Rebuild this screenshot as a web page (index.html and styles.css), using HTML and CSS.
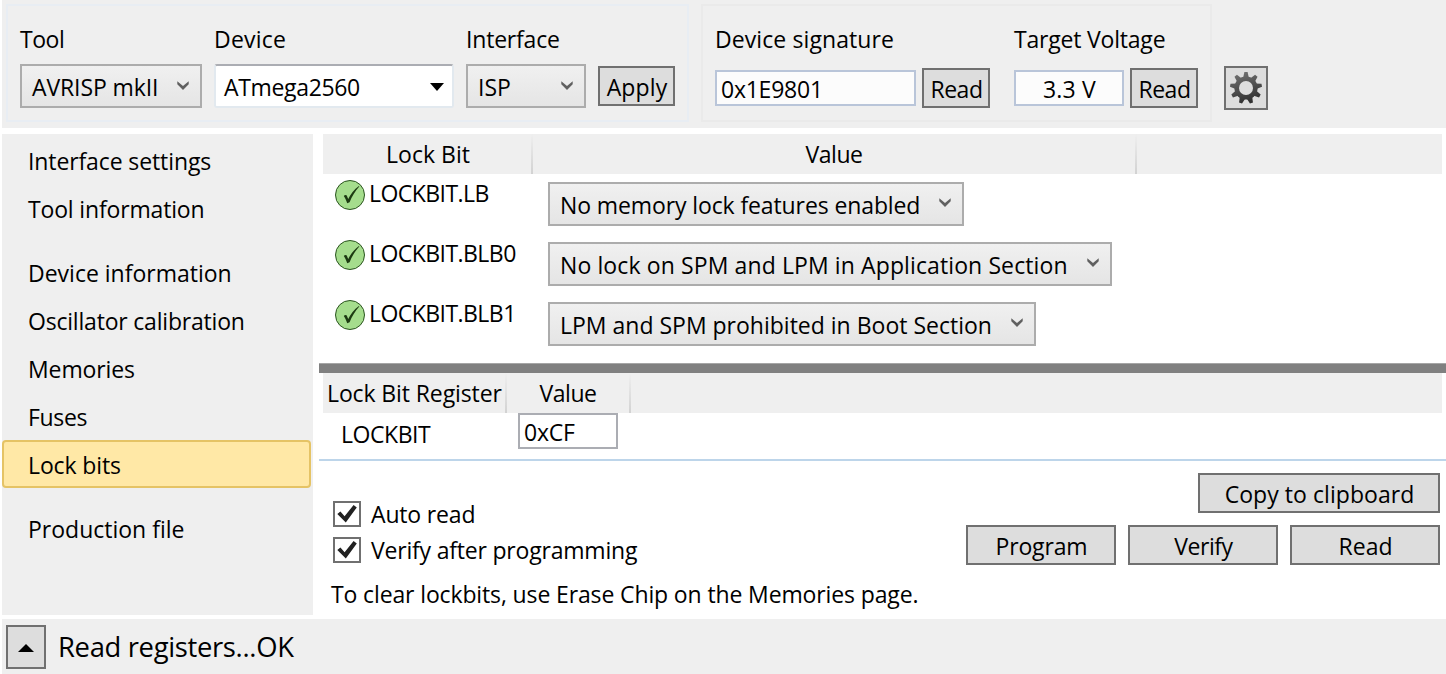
FILE: index.html
```
<!DOCTYPE html>
<html lang="en">
<head>
<meta charset="utf-8">
<title>Device Programming</title>
<link rel="stylesheet" href="styles.css">
</head>
<body>
<svg class="defs" width="0" height="0" aria-hidden="true">
  <defs>
    <symbol id="chevron" viewBox="0 0 12 9"><path d="M0.3 0.2 L6 5 L11.7 0.2 V3.2 L6 9 L0.3 3.2Z" fill="#606060"/></symbol>
    <symbol id="ok" viewBox="0 0 30 30">
      <circle cx="15" cy="15" r="14.5" fill="#a5dd8d" stroke="#2b5420" stroke-width="1"/>
      <path d="M8.8 15.9 C9.6 14.8 11.2 14.6 11.8 15.6 C12.4 16.7 12.6 18 13.2 19.1 C15.6 14.2 19 9.4 24 5.9 L24.3 6.5 C20.2 11 16.8 16.5 14.6 22.2 L12.2 23.2 C11.2 20.5 10.4 18 8.8 15.9Z" fill="#1d3b12"/>
    </symbol>
    <symbol id="tick" viewBox="0 0 28 26"><path d="M4.3 13 L7.4 10.6 L11.6 15.2 L20.6 4 L23.8 6.4 L12.8 21.6 Z" fill="#212121"/></symbol>
  </defs>
</svg>
<div class="window">
  <header class="toolbar">
    <div class="group group-tool">
      <div class="field w-tool">
        <span class="label ls-n45">Tool</span>
        <div class="combo"><span class="combo-text ls-n11">AVRISP mkII</span><svg class="chevron"><use href="#chevron"/></svg></div>
      </div>
      <div class="field w-device">
        <span class="label ls-p20">Device</span>
        <div class="combo editable"><span class="combo-text ls-n34">ATmega2560</span><svg class="arrow" viewBox="0 0 14 8"><path d="M0 0H14L7 8Z"/></svg></div>
      </div>
      <div class="field w-iface">
        <span class="label ls-n20">Interface</span>
        <div class="combo"><span class="combo-text">ISP</span><svg class="chevron"><use href="#chevron"/></svg></div>
      </div>
      <button class="btn btn-apply ls-p13">Apply</button>
    </div>
    <div class="group group-sig">
      <div class="field w-sig">
        <span class="label ls-p09">Device signature</span>
        <div class="readout ls-n24">0x1E9801</div>
      </div>
      <button class="btn btn-read ls-n45">Read</button>
      <div class="field w-volt">
        <span class="label ls-n20">Target Voltage</span>
        <div class="readout centered ls-p20">3.3 V</div>
      </div>
      <button class="btn btn-read ls-n45">Read</button>
    </div>
    <button class="btn btn-gear" aria-label="Settings">
      <svg width="32" height="34" viewBox="-16 -17 32 34">
        <defs>
          <linearGradient id="steel" x1="0.3" y1="0" x2="0.6" y2="1"><stop offset="0" stop-color="#707070"/><stop offset="1" stop-color="#2c2c2c"/></linearGradient>
          <g id="tooth"><path d="M-2.9 -10 L-1.6 -16 H1.6 L2.9 -10Z"/></g>
          <mask id="teeth" maskUnits="userSpaceOnUse" x="-17" y="-17" width="34" height="34">
            <g fill="#fff">
              <circle r="11.6"/>
              <use href="#tooth"/><use href="#tooth" transform="rotate(40)"/><use href="#tooth" transform="rotate(80)"/>
              <use href="#tooth" transform="rotate(120)"/><use href="#tooth" transform="rotate(160)"/><use href="#tooth" transform="rotate(200)"/>
              <use href="#tooth" transform="rotate(240)"/><use href="#tooth" transform="rotate(280)"/><use href="#tooth" transform="rotate(320)"/>
            </g>
            <circle r="7" fill="#000"/>
          </mask>
        </defs>
        <rect x="-16" y="-16" width="32" height="32" fill="url(#steel)" mask="url(#teeth)"/>
      </svg>
    </button>
  </header>

  <div class="body">
    <nav class="sidebar">
      <a class="item ls-n11">Interface settings</a>
      <a class="item ls-n16">Tool information</a>
      <a class="item spaced">Device information</a>
      <a class="item ls-n20">Oscillator calibration</a>
      <a class="item ls-n11">Memories</a>
      <a class="item ls-n34">Fuses</a>
      <a class="item selected ls-n11">Lock bits</a>
      <a class="item spaced">Production file</a>
    </nav>

    <main class="content">
      <div class="head head-bits"><div class="th">Lock Bit</div><div class="th value ls-n45">Value</div></div>
      <div class="bits">
        <div class="bit-row"><svg class="ok"><use href="#ok"/></svg><span class="bit-name">LOCKBIT.LB</span>
          <div class="combo w-lb"><span class="combo-text ls-n11">No memory lock features enabled</span><svg class="chevron up"><use href="#chevron"/></svg></div></div>
        <div class="bit-row"><svg class="ok"><use href="#ok"/></svg><span class="bit-name">LOCKBIT.BLB0</span>
          <div class="combo w-blb0"><span class="combo-text ls-p11">No lock on SPM and LPM in Application Section</span><svg class="chevron up"><use href="#chevron"/></svg></div></div>
        <div class="bit-row"><svg class="ok"><use href="#ok"/></svg><span class="bit-name">LOCKBIT.BLB1</span>
          <div class="combo w-blb1"><span class="combo-text">LPM and SPM prohibited in Boot Section</span><svg class="chevron up"><use href="#chevron"/></svg></div></div>
      </div>
      <div class="splitter"></div>
      <div class="head head-regs"><div class="th first ls-n11">Lock Bit Register</div><div class="th value ls-n45">Value</div></div>
      <div class="reg-row"><span class="reg-name">LOCKBIT</span><div class="reg-value ls-n24">0xCF</div></div>
      <div class="footer">
        <div class="options">
          <label class="check"><svg class="box"><use href="#tick"/></svg><span class="ls-n16">Auto read</span></label>
          <label class="check"><svg class="box"><use href="#tick"/></svg><span class="ls-n20">Verify after programming</span></label>
          <p class="hint">To clear lockbits, use Erase Chip on the Memories page.</p>
        </div>
        <div class="actions">
          <button class="btn btn-copy ls-p05">Copy to clipboard</button>
          <button class="btn ls-n16">Program</button>
          <button class="btn ls-n45">Verify</button>
          <button class="btn">Read</button>
        </div>
      </div>
    </main>
  </div>

  <footer class="status">
    <button class="btn btn-expand" aria-label="Expand"><svg width="16" height="8" viewBox="0 0 16 8"><path d="M0 8 L8 0 L16 8Z"/></svg></button>
    <span class="status-text">Read registers...OK</span>
  </footer>
</div>
</body>
</html>
```
FILE: styles.css
```
* { box-sizing: border-box; }
body {
  margin: 0;
  background: #fff;
  color: #000;
  font: 23px/32px "Open Sans", "Noto Sans", sans-serif;
  white-space: nowrap;
  overflow: hidden;
}
.defs { position: absolute; }
svg { display: block; flex: none; }
.window {
  width: 1446px;
  height: 674px;
  padding-left: 2px;
  display: flex;
  flex-direction: column;
}

/* letter-spacing steps */
.ls-n45 { letter-spacing: -0.45px; }
.ls-n34 { letter-spacing: -0.34px; }
.ls-n24 { letter-spacing: -0.24px; }
.ls-n20 { letter-spacing: -0.2px; }
.ls-n16 { letter-spacing: -0.16px; }
.ls-n11 { letter-spacing: -0.11px; }
.ls-p05 { letter-spacing: 0.05px; }
.ls-p09 { letter-spacing: 0.09px; }
.ls-p11 { letter-spacing: 0.11px; }
.ls-p13 { letter-spacing: 0.13px; }
.ls-p20 { letter-spacing: 0.2px; }

/* shared controls */
.btn {
  height: 40px;
  padding: 2px 0 0 1px;
  border: 2px solid #707070;
  background: #ddd;
  color: #000;
  font-family: inherit;
  font-size: 23px;
  line-height: 34px;
  text-align: center;
}
.combo {
  height: 44px;
  padding: 0 11px 0 10px;
  border: 2px solid #acacac;
  background: linear-gradient(#f0f0f0, #e5e5e5);
  display: flex;
  justify-content: space-between;
}
.combo-text { line-height: 42px; }
.chevron { width: 12px; height: 9px; margin-top: 15px; }
.chevron.up { margin-top: 14px; }
.combo.editable {
  padding: 0 8px 0 8px;
  background: #fff;
  border-color: #abadb3 #e2e9ef #e2e9ef;
  border-radius: 3px;
}
.arrow { width: 14px; height: 8px; margin-top: 17px; }

/* top toolbar */
.toolbar {
  height: 128px;
  padding: 4px 0 0 4px;
  background: #efefef;
  display: flex;
  gap: 12px;
}
.group {
  height: 118px;
  padding: 0 12px 12px;
  border: 2px solid #e8edf3;
  display: flex;
  align-items: flex-end;
}
.group-tool { gap: 12px; }
.group-sig { border-color: #eaeaea; gap: 6px; }
.field { display: flex; flex-direction: column; }
.label { margin-bottom: 9px; }
.w-tool { width: 182px; }
.w-device { width: 240px; }
.w-iface { width: 120px; }
.w-sig { width: 201px; margin-bottom: 2px; }
.w-volt { width: 110px; margin: 0 0 2px 18px; }
.group-sig .label { margin-bottom: 15px; }
.readout {
  height: 36px;
  padding-left: 4px;
  border: 2px solid #b9c5d9;
  background: #fcfcfc;
  line-height: 34px;
}
.readout.centered { padding: 0 0 0 1px; text-align: center; }
.btn-apply { width: 77px; margin-bottom: 2px; }
.btn-read { width: 68px; }
.btn-gear {
  width: 44px;
  height: 44px;
  margin-top: 62px;
  padding: 0;
  display: flex;
  align-items: center;
  justify-content: center;
}

/* middle */
.body {
  height: 481px;
  margin-top: 6px;
  display: flex;
  gap: 6px;
}
.sidebar {
  width: 311px;
  padding-top: 2px;
  background: #efefef;
  flex: none;
}
.item {
  display: block;
  width: 309px;
  height: 48px;
  padding-left: 24px;
  border: 2px solid transparent;
  border-radius: 4px;
  line-height: 46px;
}
.item.spaced { margin-top: 16px; }
.item.selected { background: #ffe8a6; border-color: #e5c365; }

.content { flex: 1; display: flex; flex-direction: column; }
.head {
  height: 40px;
  margin: 0 4px;
  background: #efefef;
  display: grid;
  line-height: 40px;
}
.head-bits { grid-template-columns: 210px 604px 1fr; }
.head-regs { grid-template-columns: 184px 124px 1fr; }
.th {
  text-align: center;
  background: linear-gradient(#efefef, #d2d2d2) right / 2px 100% no-repeat;
}
.th.first { text-align: left; padding-left: 4px; }
.th.value { padding-right: 2px; }

.bits { height: 189px; padding: 3px 0 0 16px; }
.bit-row {
  height: 60px;
  display: grid;
  grid-template-columns: 30px 183px max-content;
  align-items: start;
}
.ok { width: 30px; height: 30px; margin-top: 3px; }
.bit-name { padding-left: 4px; letter-spacing: -0.55px; }
.bit-row .combo { margin-top: 5px; }
.w-lb { width: 416px; }
.w-blb0 { width: 564px; }
.w-blb1 { width: 488px; }

.splitter { height: 10px; background: #808080; border-top: 1px solid #a6a6a6; }

.reg-row {
  height: 48px;
  padding-left: 22px;
  border-bottom: 2px solid #bdd5ea;
  display: flex;
}
.reg-name { width: 177px; padding-top: 5px; letter-spacing: -0.46px; }
.reg-value {
  width: 100px;
  height: 36px;
  padding-left: 4px;
  border: 2px solid #abadb3;
  line-height: 34px;
}

.footer {
  flex: 1;
  padding: 12px 6px 0 14px;
  display: flex;
  justify-content: space-between;
  align-items: flex-start;
}
.options { padding-top: 25px; }
.check { height: 36px; display: flex; gap: 10px; }
.box {
  width: 28px;
  height: 26px;
  margin-top: 3px;
  box-shadow: inset 0 0 0 2px #707070;
}
.hint { margin: 8px 0 0 -2px; letter-spacing: -0.13px; }
.actions {
  display: grid;
  grid-template-columns: repeat(3, 150px);
  gap: 12px;
}
.btn-copy { grid-column: 1 / -1; justify-self: end; width: 242px; }

/* status bar */
.status {
  height: 55px;
  margin-top: 4px;
  padding: 6px 0 0 4px;
  background: #efefef;
  display: flex;
}
.btn-expand {
  width: 40px;
  height: 44px;
  padding: 2px 0 0;
  display: flex;
  align-items: center;
  justify-content: center;
}
.status-text {
  margin-left: 12px;
  font-size: 27.4px;
  line-height: 43px;
  letter-spacing: -0.33px;
}
```
